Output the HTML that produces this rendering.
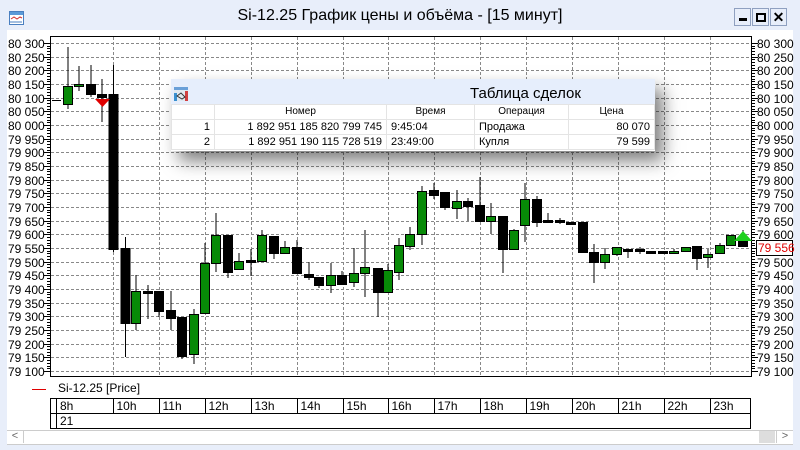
<!DOCTYPE html>
<html><head><meta charset="utf-8"><style>
body{margin:0;width:800px;height:450px;background:#e8eefa;font-family:"Liberation Sans",sans-serif;overflow:hidden;position:relative}
.t{position:absolute;white-space:nowrap}
.btn{position:absolute;top:8px;width:15px;height:16px;border:1px solid #8fa0c0;background:#e8eefa}
#tbl{position:absolute;left:171px;top:79px;width:484px;height:72px;background:#fff;box-shadow:8px 10px 16px rgba(0,0,0,.5);font-size:11px}
#tbl table{border-collapse:collapse;position:absolute;top:25px;left:0;width:484px}
#tbl td{border:1px solid #e4e4e4;height:14px;padding:0 4px;line-height:14px}
</style></head><body>
<svg class="t" style="left:9px;top:11px" width="15" height="14"><rect x="0.5" y="0.5" width="14" height="13" fill="#fff" stroke="#4a7fc0"/><rect x="1" y="1" width="13" height="3" fill="#5a9ad8"/><polyline points="2,8 5,6 8,8 11,6 13,7" fill="none" stroke="#d03030"/><path d="M2 12V10M4 12V10M6 12V10M8 12V10M10 12V10M12 12V10" stroke="#4a7fc0"/></svg>
<div class="t" style="left:0;width:800px;top:7px;text-align:center;font-size:16px;color:#000">Si-12.25 График цены и объёма - [15 минут]</div>
<div class="btn" style="left:734px"><div style="position:absolute;left:4px;top:9px;width:8px;height:3px;background:#000"></div></div>
<div class="btn" style="left:752px"><div style="position:absolute;left:3px;top:4px;width:6px;height:5px;border:2px solid #000"></div></div>
<div class="btn" style="left:770px;font-weight:bold;font-size:14px;text-align:center;line-height:16px">✕</div>
<div style="position:absolute;left:7px;top:30px;width:786px;height:400px;background:#fff"></div>
<svg id="ch" class="t" style="left:0;top:0" width="800" height="450" font-family="Liberation Sans" font-size="12"></svg>
<div class="t" style="left:32px;top:389px;width:14px;height:1px;background:#e00000"></div>
<div class="t" style="left:58px;top:381px;font-size:12px">Si-12.25 [Price]</div>
<div style="position:absolute;left:7px;top:430px;width:786px;height:13px;background:#fff;border-top:1px solid #ccc;border-bottom:1px solid #ccc"></div>
<div class="t" style="left:7px;top:430px;width:16px;height:13px;border-right:1px solid #ccc;font-size:11px;text-align:center;color:#666">&lt;</div>
<div class="t" style="left:759px;top:431px;width:16px;height:12px;background:#ddd"></div>
<div class="t" style="left:776px;top:430px;width:16px;height:13px;border-left:1px solid #ccc;font-size:11px;text-align:center;color:#666">&gt;</div>
<div id="tbl">
<div style="position:absolute;left:0;top:0;width:484px;height:25px;background:#e6eefc"></div>
<svg class="t" style="left:3px;top:8px" width="14" height="14"><rect width="14" height="14" fill="#e0e8f0"/><rect y="0" width="14" height="3" fill="#6aa0d8"/><rect x="11" y="4" width="3" height="10" fill="#d04040"/><rect x="0" y="6" width="3" height="8" fill="#3a90d0"/><path d="M3 9l4-3 4 4-3 2z" fill="none" stroke="#333"/></svg>
<div class="t" style="left:299px;top:6px;font-size:15px">Таблица сделок</div>
<table>
<tr style="background:#fff;font-size:10px;text-align:center"><td style="width:34px"></td><td style="width:163px">Номер</td><td style="width:79px">Время</td><td style="width:85px">Операция</td><td>Цена</td></tr>
<tr><td style="text-align:right">1</td><td style="text-align:right">1 892 951 185 820 799 745</td><td>9:45:04</td><td>Продажа</td><td style="text-align:right">80 070</td></tr>
<tr><td style="text-align:right">2</td><td style="text-align:right">1 892 951 190 115 728 519</td><td>23:49:00</td><td>Купля</td><td style="text-align:right">79 599</td></tr>
</table></div>
<script>
var s='',Y=function(p){return 43+(80300-p)/50*13.667};
for(var p=80300;p>=79100;p-=50){var y=Math.round(Y(p))+.5;s+='<line x1="51" x2="750" y1="'+y+'" y2="'+y+'" stroke="#888" stroke-dasharray="3,2"/>';
var l=(p/1000|0)+' '+String(p%1000).padStart(3,'0');s+='<text x="8" y="'+(y+4.5)+'">'+l+'</text><text x="757" y="'+(y+4.5)+'">'+l+'</text>';}
for(var p=80300;p>=79100;p-=10){var y=Math.round(Y(p))+.5,w=p%50?3:6;s+='<line x1="'+(50-w)+'" x2="50" y1="'+y+'" y2="'+y+'" stroke="#000"/><line x1="752" x2="'+(752+w)+'" y1="'+y+'" y2="'+y+'" stroke="#000"/>';}
for(var i=0;i<14;i++){var x=Math.round(113+i*45.9)+.5;s+='<line x1="'+x+'" x2="'+x+'" y1="37" y2="376" stroke="#888" stroke-dasharray="3,2"/>';}
s+='<rect x="50.5" y="36.5" width="701" height="340" fill="none" stroke="#000"/>';
s+='<line x1="52" x2="61" y1="100.5" y2="100.5" stroke="#000"/>';
var C=[[68,47,109,86,104,1],[79,66,91,84,86,1],[91,65,97,84,94,0],[102,79,122,94,97,0],[113.5,65,252,94,249,0],[125.5,237,357,248,323,0],[136,275,330,291,323,1],[148,285,319,291,293,0],[159,291,317,291,311,0],[171,291,330,310,318,0],[182,317,359,317,356,0],[194,309,364,314,354,1],[205,243,313,263,313,1],[216,213,272,235,263,1],[228,235,278,235,272,0],[239,253,270,261,269,1],[251,249,276,260,262,0],[262,230,261,235,261,1],[274,236,259,236,253,0],[285,241,253,247,253,1],[297,240,273,247,273,0],[309,262,280,274,277,0],[319,277,288,277,285,0],[331,263,293,275,285,1],[342,271,284,275,284,0],[354,248,287,273,282,1],[365,230,297,267,273,1],[378,268,317,268,292,0],[388,264,292,270,292,1],[399,238,280,245,272,1],[410,227,250,234,246,1],[422,186,245,191,234,1],[434,183,199,190,195,0],[445,192,210,192,207,0],[457,190,219,201,208,1],[468,198,221,201,206,0],[480,177,221,205,221,0],[491,203,234,216,221,1],[503,216,273,216,249,0],[514,229,249,230,249,1],[525,183,242,199,225,1],[537,196,227,199,222,0],[548,213,223,220,222,0],[560,218,224,220,222,0],[571,222,225,222,224,0],[583,222,253,222,252,0],[594,244,283,252,262,0],[605,248,269,254,262,1],[617,247,256,247,254,1],[628,250,258,249,251,0],[640,247,254,249,251,0],[651,251,253,251,253,0],[663,251,253,251,253,0],[674,249,253,251,253,1],[686,247,251,247,251,1],[697,246,270,246,258,0],[708,249,268,254,257,1],[720,243,253,245,253,1],[731,235,245,235,245,1],[743,230,246,241,246,0]];
C.forEach(function(c){var x=c[0];s+='<line x1="'+x+'" x2="'+x+'" y1="'+c[1]+'" y2="'+c[2]+'" stroke="#000"/>';var h=Math.max(c[4]-c[3],2);s+='<rect x="'+(x-4.5)+'" y="'+(c[3]+.5)+'" width="9" height="'+h+'" fill="'+(c[5]?'#078a07':'#000')+'" stroke="#000"/>';});
s+='<polygon points="95,99 110,99 102.5,107" fill="#e00000"/><polygon points="734,241 752,241 743,231" fill="#1ed01e"/>';
s+='<rect x="756.5" y="240.5" width="36" height="15" fill="#fff" stroke="#000"/><text x="758" y="252" fill="#e00000">79 556</text>';
s+='<rect x="50.5" y="398.5" width="700" height="30" fill="none" stroke="#000"/><line x1="56.5" x2="56.5" y1="398" y2="429" stroke="#000"/><line x1="50" x2="751" y1="413.5" y2="413.5" stroke="#000"/><text x="60" y="410">8h</text><text x="60" y="425">21</text>';
var hs=['10h','11h','12h','13h','14h','15h','16h','17h','18h','19h','20h','21h','22h','23h'];
for(var i=0;i<14;i++){var x=Math.round(113+i*45.9)+.5;s+='<line x1="'+x+'" x2="'+x+'" y1="398" y2="413" stroke="#000"/><text x="'+(x+3)+'" y="410">'+hs[i]+'</text>';}
document.getElementById('ch').innerHTML=s;
</script>
</body></html>
